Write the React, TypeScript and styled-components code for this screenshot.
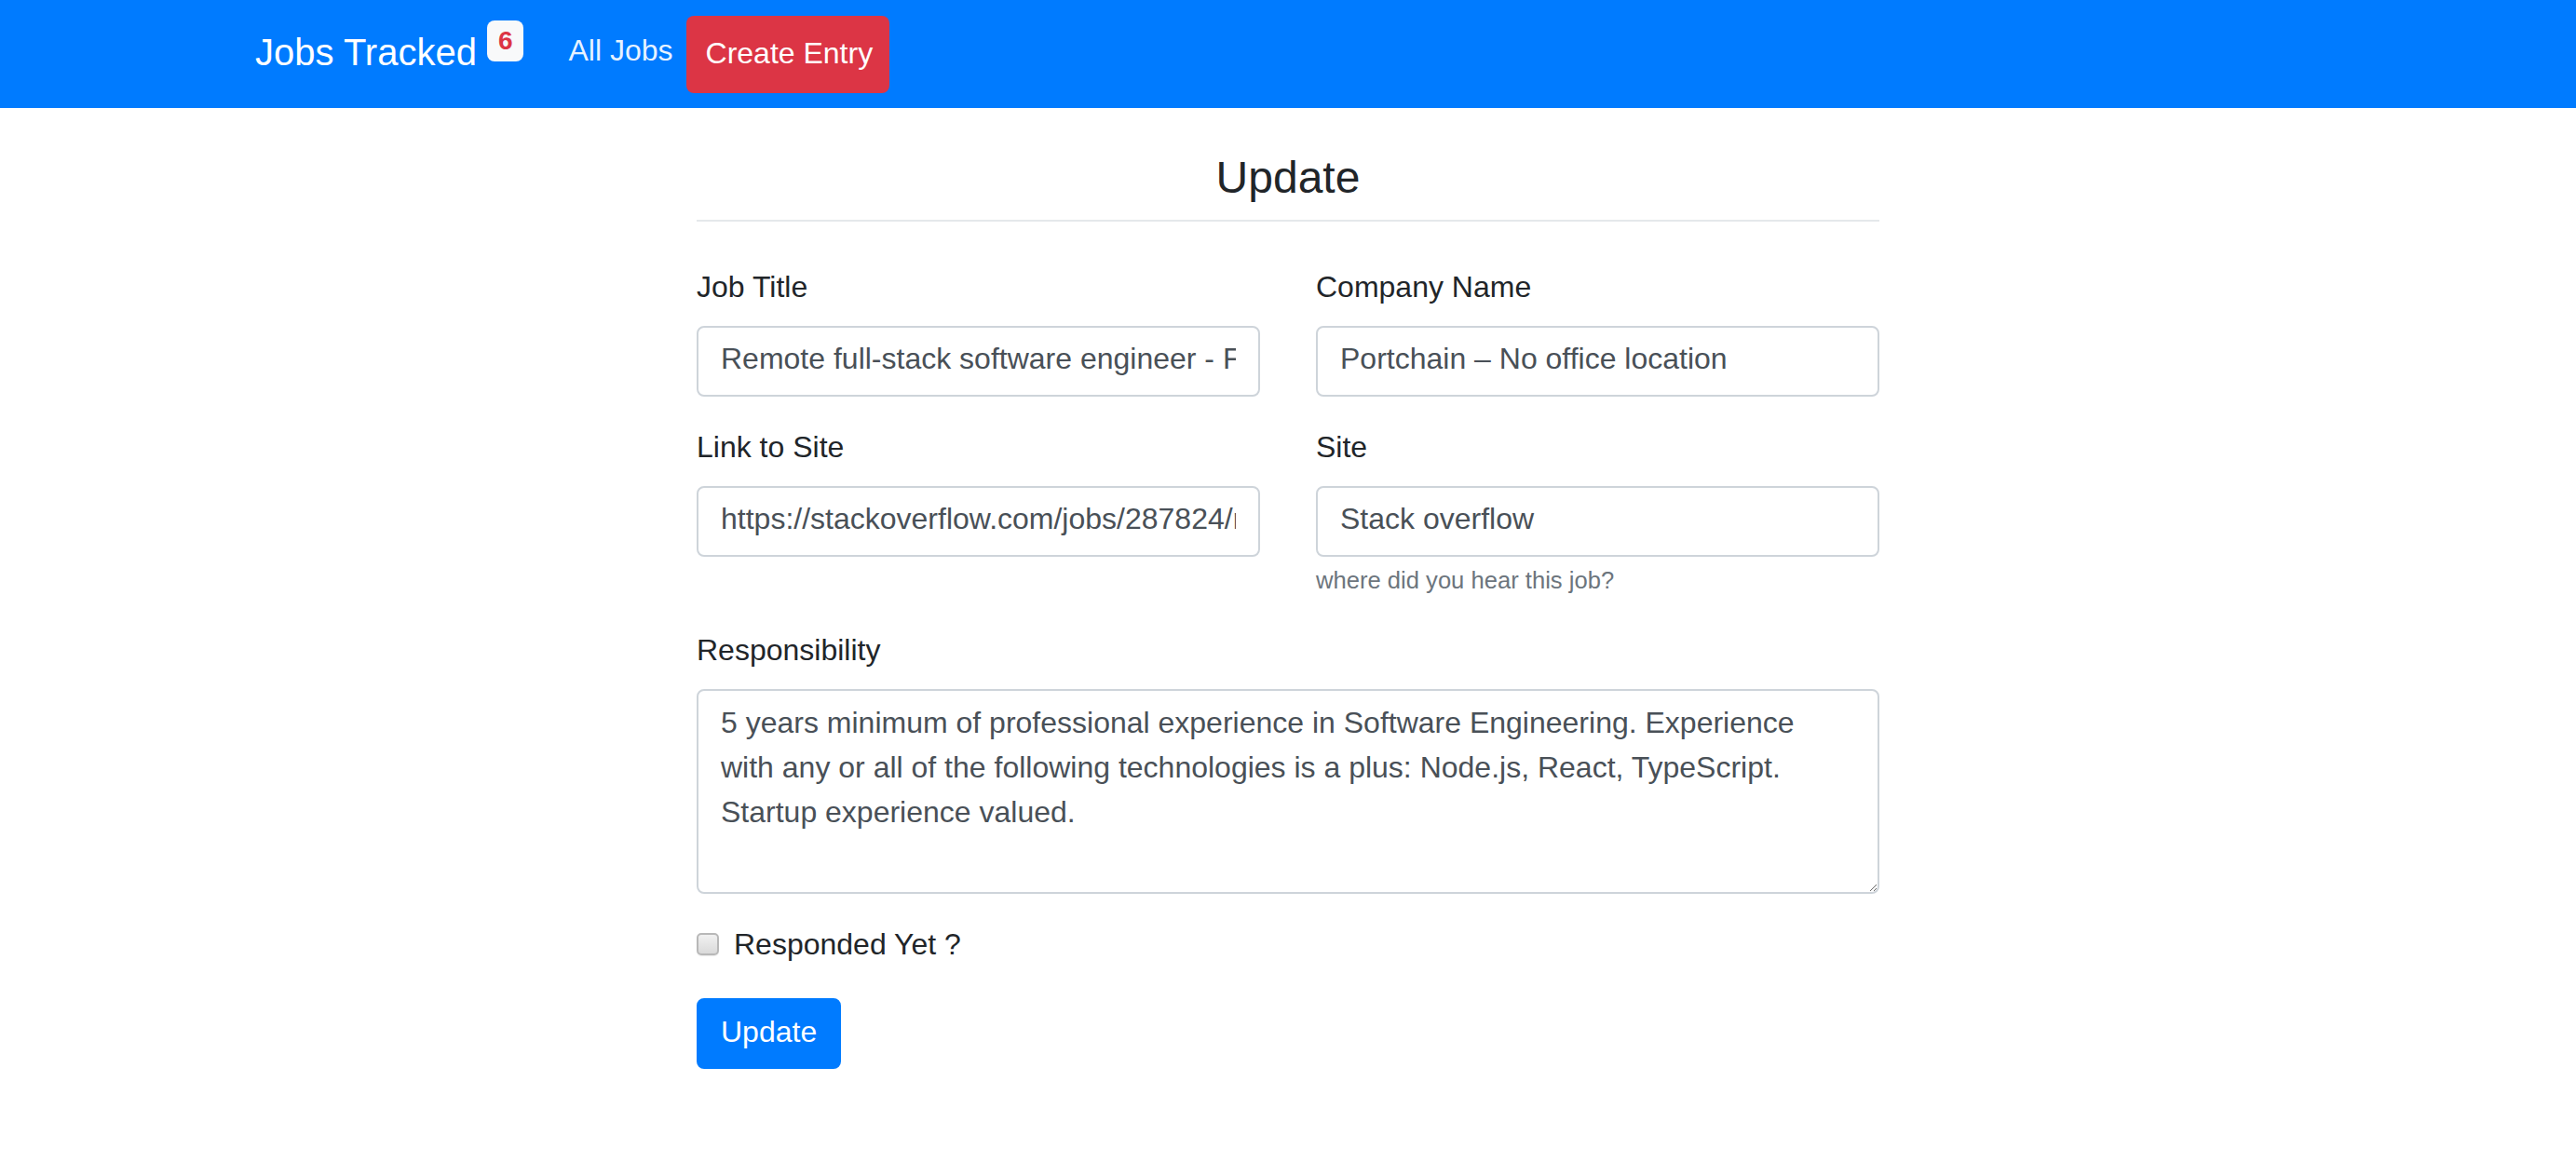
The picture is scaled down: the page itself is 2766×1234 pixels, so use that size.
import React, { useState } from 'react';
import styled, { createGlobalStyle } from 'styled-components';

const GlobalStyle = createGlobalStyle`
  * {
    box-sizing: border-box;
  }

  body {
    margin: 0;
    background: #fff;
    color: #212529;
    font-family: "Liberation Sans", Arial, Helvetica, sans-serif;
  }
`;

const App: React.FC = () => {
  const [form, setForm] = useState({
    jobTitle: 'Remote full-stack software engineer - Full time',
    companyName: 'Portchain – No office location',
    link: 'https://stackoverflow.com/jobs/287824/remote-full-stack-software-engineer-portchain',
    site: 'Stack overflow',
    responsibility:
      '5 years minimum of professional experience in Software Engineering. Experience with any or all of the following technologies is a plus: Node.js, React, TypeScript. Startup experience valued.',
    responded: false
  });

  const handleChange = (e: React.ChangeEvent<HTMLInputElement | HTMLTextAreaElement>) => {
    setForm({ ...form, [e.target.name]: e.target.value });
  };

  return (
    <>
      <GlobalStyle />
      <Navbar>
        <Brand href="#">
          Jobs Tracked
          <Badge>6</Badge>
        </Brand>
        <NavItems>
          <NavLink href="#">All Jobs</NavLink>
          <CreateButton href="#">Create Entry</CreateButton>
        </NavItems>
      </Navbar>

      <Container>
        <Heading>Update</Heading>

        <Form onSubmit={(e) => e.preventDefault()}>
          <FormRow>
            <FormGroup>
              <Label>Job Title</Label>
              <Input name="jobTitle" value={form.jobTitle} onChange={handleChange} />
            </FormGroup>
            <FormGroup>
              <Label>Company Name</Label>
              <Input name="companyName" value={form.companyName} onChange={handleChange} />
            </FormGroup>
          </FormRow>

          <FormRow>
            <FormGroup>
              <Label>Link to Site</Label>
              <Input name="link" value={form.link} onChange={handleChange} />
            </FormGroup>
            <FormGroup>
              <Label>Site</Label>
              <Input name="site" value={form.site} onChange={handleChange} />
              <HelpText>where did you hear this job?</HelpText>
            </FormGroup>
          </FormRow>

          <FormGroup>
            <Label>Responsibility</Label>
            <TextArea
              name="responsibility"
              rows={4}
              value={form.responsibility}
              onChange={handleChange}
            />
          </FormGroup>

          <CheckGroup>
            <Checkbox
              type="checkbox"
              id="responded"
              checked={form.responded}
              onChange={(e) => setForm({ ...form, responded: e.target.checked })}
            />
            <CheckLabel htmlFor="responded">Responded Yet ?</CheckLabel>
          </CheckGroup>

          <SubmitButton type="submit">Update</SubmitButton>
        </Form>
      </Container>
    </>
  );
};

const Navbar = styled.nav`
  display: flex;
  align-items: center;
  height: 116px;
  padding: 0 32px 0 274px;
  background: #007bff;
`;

const Brand = styled.a`
  display: flex;
  align-items: flex-start;
  height: 60px;
  margin: 0 32px 4px 0;
  color: #fff;
  font-size: 40px;
  line-height: 60px;
  text-decoration: none;
  white-space: nowrap;
`;

const Badge = styled.span`
  margin: -4px 0 0 11px;
  padding: 8px 12px;
  border-radius: 8px;
  background: #f8f9fa;
  color: #dc3545;
  font-size: 28px;
  font-weight: 700;
  line-height: 1;
`;

const NavItems = styled.div`
  display: flex;
  align-items: center;
`;

const NavLink = styled.a`
  padding: 0 14px 8px 16px;
  color: rgba(255, 255, 255, 0.92);
  font-size: 32px;
  line-height: 48px;
  text-decoration: none;
`;

const CreateButton = styled.a`
  display: flex;
  align-items: center;
  height: 83px;
  padding: 0 18px 2px 21px;
  border-radius: 8px;
  background: #dc3545;
  color: #fff;
  font-size: 32px;
  line-height: 48px;
  text-decoration: none;
`;

const Container = styled.main`
  width: 1270px;
  margin: 46px auto 0;
  padding-bottom: 80px;
`;

const Heading = styled.h4`
  margin: 0;
  padding-bottom: 16px;
  border-bottom: 2px solid #e5e8eb;
  font-size: 48px;
  font-weight: 400;
  line-height: 57.6px;
  text-align: center;
`;

const Form = styled.form`
  display: flex;
  flex-direction: column;
  margin-top: 48px;
`;

const FormRow = styled.div`
  display: grid;
  grid-template-columns: 1fr 1fr;
  column-gap: 60px;
`;

const FormGroup = styled.div`
  display: flex;
  flex-direction: column;
  min-width: 0;
  margin-bottom: 32px;
`;

const Label = styled.label`
  margin-bottom: 16px;
  padding-bottom: 4px;
  font-size: 32px;
  line-height: 44px;
`;

const fieldStyles = `
  width: 100%;
  padding: 10px 24px 14px;
  border: 2px solid #ced4da;
  border-radius: 8px;
  background: #fff;
  color: #495057;
  font-family: "Liberation Sans", Arial, Helvetica, sans-serif;
  font-size: 32px;
  line-height: 48px;

  &:focus {
    border-color: #80bdff;
    outline: none;
  }
`;

const Input = styled.input`
  ${fieldStyles}
  height: 76px;
`;

const TextArea = styled.textarea`
  ${fieldStyles}
  display: block;
  height: 220px;
  resize: vertical;
`;

const HelpText = styled.small`
  margin-top: 6px;
  padding-bottom: 2px;
  color: #6c757d;
  font-size: 25.6px;
  line-height: 38.4px;
`;

const CheckGroup = styled.div`
  display: flex;
  align-items: flex-start;
  margin-bottom: 32px;
`;

const Checkbox = styled.input`
  appearance: none;
  flex-shrink: 0;
  width: 24px;
  height: 24px;
  margin: 10px 16px 0 0;
  border: 2px solid #b8b8b8;
  border-radius: 5px;
  background: linear-gradient(#f1f1f1, #dadada);
  box-shadow: 0 1px 1px rgba(0, 0, 0, 0.08);

  &:checked {
    background: #007bff;
    border-color: #007bff;
  }
`;

const CheckLabel = styled.label`
  padding-bottom: 4px;
  font-size: 32px;
  line-height: 44px;
`;

const SubmitButton = styled.button`
  align-self: flex-start;
  padding: 10px 24px 14px;
  border: 2px solid #007bff;
  border-radius: 8px;
  background: #007bff;
  color: #fff;
  font-family: "Liberation Sans", Arial, Helvetica, sans-serif;
  font-size: 32px;
  line-height: 48px;
  cursor: pointer;

  &:hover {
    background: #0069d9;
  }
`;

export default App;
